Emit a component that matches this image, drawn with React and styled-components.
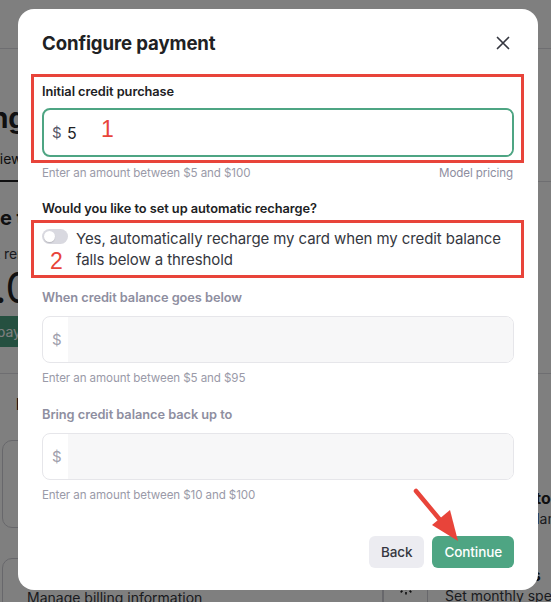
import React from "react";
import styled, { createGlobalStyle } from "styled-components";

const Global = createGlobalStyle`
  * { box-sizing: border-box; }
  html, body { margin: 0; padding: 0; }
  body {
    font-family: Inter, "Noto Sans", "Liberation Sans", sans-serif;
    background: #ffffff;
    overflow: hidden;
    width: 551px;
    height: 602px;
  }
`;

const RED = "#e8443a";
const GREEN = "#4ea583";

/* ---------- background page ---------- */
const Page = styled.div`
  width: 551px;
  height: 602px;
  overflow: hidden;
  position: relative;
  color: #202123;
`;

const TopBar = styled.div`
  height: 49px;
  border-bottom: 1px solid #dcdce2;
`;

const Main = styled.div`
  margin-left: -58px;
  width: 680px;
  display: flex;
  flex-direction: column;
`;

const PageTitle = styled.h1`
  margin: 52px 0 0;
  font-size: 28px;
  line-height: 34px;
  font-weight: 700;
`;

const Tabs = styled.div`
  margin-top: 14px;
  display: flex;
  gap: 24px;
  border-bottom: 1px solid #dcdce2;
`;

const Tab = styled.div`
  padding: 0 0 11px 18px;
  font-size: 14px;
  line-height: 20px;
  border-bottom: 2px solid ${(p) => (p.$active ? "#202123" : "transparent")};
  margin-bottom: -1px;
`;

const Section = styled.h2`
  margin: 23px 0 0;
  padding-left: 27px;
  font-size: 20px;
  line-height: 26px;
  font-weight: 700;
`;

const Small = styled.div`
  margin-top: 13px;
  padding-left: 18px;
  font-size: 14px;
  line-height: 20px;
  color: #353740;
`;

const Amount = styled.div`
  margin-top: 0;
  padding-left: 0;
  font-size: 42px;
  line-height: 48px;
  font-weight: 400;
`;

const PageButton = styled.div`
  margin: 4px 0 0 10px;
  align-self: flex-start;
  height: 31px;
  padding: 0 14px;
  display: flex;
  align-items: center;
  background: #4aa181;
  color: #fff;
  font-size: 14px;
  border-radius: 6px;
`;

const Divider = styled.div`
  margin-top: 26px;
  border-top: 1px solid #dcdce2;
`;

const CardTitle = styled.div`
  margin-top: 20px;
  padding-left: 74px;
  font-size: 16px;
  font-weight: 700;
`;

const BottomGrid = styled.div`
  position: absolute;
  left: 0;
  top: 440px;
  width: 720px;
  display: grid;
  grid-template-columns: 383px 337px;
`;

const LeftStack = styled.div`
  display: flex;
  flex-direction: column;
  gap: 30px;
`;

const LeftCard = styled.div`
  height: ${(p) => p.$h}px;
  margin-left: 2px;
  border: 1px solid #cfcfd6;
  border-radius: 10px;
  padding: ${(p) => p.$pt || 0}px 0 0 24px;
  font-size: 14px;
  line-height: 20px;
  color: #353740;
`;

const Card = styled.div`
  display: flex;
  flex-direction: column;
  gap: 31px;
  padding-top: 47px;
`;

const CardRow = styled.div`
  display: flex;
  gap: 17px;
`;

const CardIcon = styled.div`
  width: 45px;
  height: 46px;
  flex: none;
  border: 1px solid #cfcfd6;
  border-radius: 8px;
  display: flex;
  align-items: flex-start;
  justify-content: center;
  padding-top: 12px;
`;

const CardBody = styled.div`
  display: flex;
  flex-direction: column;
`;

const CardHead = styled.div`
  font-size: 16px;
  font-weight: 700;
  line-height: 22px;
`;

const CardDesc = styled.div`
  font-size: 14px;
  line-height: 20px;
  color: #353740;
`;

/* ---------- overlay + modal ---------- */
const Overlay = styled.div`
  position: fixed;
  inset: 0;
  background: rgba(0, 0, 0, 0.5);
  display: flex;
  align-items: flex-start;
`;

const Modal = styled.div`
  position: relative;
  margin: 9px 0 0 18px;
  width: 520px;
  background: #fff;
  border-radius: 16px;
  padding: 20px 24px 22px;
  display: flex;
  flex-direction: column;
`;

const Header = styled.div`
  display: flex;
  align-items: center;
  justify-content: space-between;
  height: 28px;
`;

const Title = styled.h2`
  margin: 0;
  font-size: 18.6px;
  line-height: 28px;
  font-weight: 700;
  color: #202123;
  letter-spacing: -0.1px;
`;

const Close = styled.button`
  width: 24px;
  height: 24px;
  margin-right: -1px;
  padding: 0;
  border: 0;
  background: transparent;
  display: flex;
  align-items: center;
  justify-content: center;
`;

const Highlight = styled.div`
  position: relative;
  margin-top: ${(p) => p.$mt || 0}px;
  &::after {
    content: "";
    position: absolute;
    left: -11px;
    right: -10px;
    top: ${(p) => p.$top}px;
    bottom: ${(p) => p.$bottom}px;
    border: 3.5px solid ${RED};
    pointer-events: none;
  }
`;

const Mark = styled.span`
  position: absolute;
  left: ${(p) => p.$x}px;
  top: ${(p) => p.$y}px;
  color: ${RED};
  font-size: 23px;
  line-height: 24px;
  font-family: "Liberation Sans", Arial, sans-serif;
`;

const Label = styled.div`
  margin-top: ${(p) => p.$mt || 0}px;
  font-size: 12.8px;
  line-height: 18px;
  font-weight: 600;
  letter-spacing: -0.05px;
  color: ${(p) => (p.$disabled ? "#8e8ea0" : "#202123")};
`;

const Field = styled.div`
  margin-top: ${(p) => p.$mt || 0}px;
  height: ${(p) => (p.$focused ? 49 : 47)}px;
  display: flex;
  align-items: center;
  border: ${(p) => (p.$focused ? `2px solid ${GREEN}` : "1px solid #e6e6ea")};
  border-radius: 8px;
  overflow: hidden;
  background: #fff;
`;

const Prefix = styled.span`
  width: ${(p) => (p.$focused ? 23 : 25)}px;
  padding-left: ${(p) => (p.$focused ? 8 : 9)}px;
  flex: none;
  color: ${(p) => (p.$focused ? "#565869" : "#a0a0ad")};
  font-size: 15px;
`;

const Value = styled.div`
  flex: 1;
  align-self: stretch;
  display: flex;
  align-items: center;
  color: #202123;
  font-size: 16px;
  background: ${(p) => (p.$disabled ? "#f7f7f8" : "#fff")};
`;

const HelpRow = styled.div`
  margin-top: ${(p) => p.$mt || 7}px;
  display: flex;
  justify-content: space-between;
  font-size: 11.6px;
  line-height: 18px;
  letter-spacing: -0.1px;
  color: #9a9aa8;
`;

const HelpLink = styled.span`
  color: #8e8ea0;
  margin-right: 1px;
`;

const ToggleRow = styled.label`
  display: flex;
  gap: 8px;
  align-items: flex-start;
  font-size: 15px;
  line-height: 21px;
  letter-spacing: -0.1px;
  color: #353740;
`;

const Toggle = styled.span`
  margin-top: 1px;
  width: 26px;
  height: 15px;
  flex: none;
  border-radius: 8px;
  background: #d9d9e0;
  position: relative;
  &::after {
    content: "";
    position: absolute;
    left: 2px;
    top: 2px;
    width: 11px;
    height: 11px;
    border-radius: 50%;
    background: #fff;
    box-shadow: 0 1px 1px rgba(0, 0, 0, 0.15);
  }
`;

const Footer = styled.div`
  margin-top: 32px;
  display: flex;
  justify-content: flex-end;
  gap: 8px;
`;

const Button = styled.button`
  height: 32px;
  padding: 0 12px;
  border: 0;
  border-radius: 6px;
  font-family: inherit;
  font-size: 13.5px;
  font-weight: 500;
  letter-spacing: -0.1px;
  background: ${(p) => (p.$primary ? GREEN : "#ececf1")};
  color: ${(p) => (p.$primary ? "#fff" : "#353740")};
`;

const Arrow = styled.svg`
  position: absolute;
  left: -18px;
  top: -9px;
  width: 551px;
  height: 602px;
  pointer-events: none;
`;

export default function App() {
  return (
    <>
      <Global />
      <Page>
        <TopBar />
        <Main>
          <PageTitle>Billing</PageTitle>
          <Tabs>
            <Tab $active>Overview</Tab>
            <Tab>Payment methods</Tab>
          </Tabs>
          <Section>Free trial</Section>
          <Small>Credit remaining</Small>
          <Amount>$0.00</Amount>
          <PageButton>Add payment details</PageButton>
          <Divider />
          <CardTitle>Pricing</CardTitle>
        </Main>
        <BottomGrid>
          <LeftStack>
            <LeftCard $h={88} />
            <LeftCard $h={200} $pt={29}>Manage billing information</LeftCard>
          </LeftStack>
          <Card>
            <CardRow>
              <CardIcon />
              <CardBody>
                <CardHead>Auto credit top-up</CardHead>
                <CardDesc>Top up the balance</CardDesc>
              </CardBody>
            </CardRow>
            <CardRow>
              <CardIcon>
                <svg width="20" height="20" viewBox="0 0 24 24" fill="none" stroke="#202123" strokeWidth="2">
                  <circle cx="12" cy="12" r="3" />
                  <path d="M12 3v3M12 18v3M3 12h3M18 12h3M5.6 5.6l2.1 2.1M16.3 16.3l2.1 2.1M5.6 18.4l2.1-2.1M16.3 7.7l2.1-2.1" />
                </svg>
              </CardIcon>
              <CardBody>
                <CardHead>Usage limits</CardHead>
                <CardDesc>Set monthly spend limits</CardDesc>
              </CardBody>
            </CardRow>
          </Card>
        </BottomGrid>
      </Page>

      <Overlay>
        <Modal>
          <Header>
            <Title>Configure payment</Title>
            <Close aria-label="Close">
              <svg width="14" height="14" viewBox="0 0 14 14" fill="none" stroke="#353740" strokeWidth="1.7" strokeLinecap="round">
                <path d="M1.5 1.5l11 11M12.5 1.5l-11 11" />
              </svg>
            </Close>
          </Header>

          <Highlight $mt={26} $top={-9} $bottom={-6}>
            <Label>Initial credit purchase</Label>
            <Field $focused $mt={7}>
              <Prefix $focused>$</Prefix>
              <Value>5</Value>
            </Field>
            <Mark $x={59} $y={34}>1</Mark>
          </Highlight>
          <HelpRow>
            <span>Enter an amount between $5 and $100</span>
            <HelpLink>Model pricing</HelpLink>
          </HelpRow>

          <Label $mt={18}>Would you like to set up automatic recharge?</Label>
          <Highlight $mt={10} $top={-8} $bottom={-8}>
            <ToggleRow>
              <Toggle />
              <span>Yes, automatically recharge my card when my credit balance falls below a threshold</span>
            </ToggleRow>
            <Mark $x={8} $y={21}>2</Mark>
          </Highlight>

          <Label $disabled $mt={19}>When credit balance goes below</Label>
          <Field $mt={9}>
            <Prefix>$</Prefix>
            <Value $disabled />
          </Field>
          <HelpRow $mt={6}>
            <span>Enter an amount between $5 and $95</span>
          </HelpRow>

          <Label $disabled $mt={19}>Bring credit balance back up to</Label>
          <Field $mt={9}>
            <Prefix>$</Prefix>
            <Value $disabled />
          </Field>
          <HelpRow $mt={6}>
            <span>Enter an amount between $10 and $100</span>
          </HelpRow>

          <Footer>
            <Button>Back</Button>
            <Button $primary>Continue</Button>
          </Footer>

          <Arrow viewBox="0 0 551 602">
            <line x1="416" y1="491" x2="446" y2="527" stroke={RED} strokeWidth="4.5" strokeLinecap="round" />
            <polygon points="458,541 432,525 450,510" fill={RED} />
          </Arrow>
        </Modal>
      </Overlay>
    </>
  );
}
